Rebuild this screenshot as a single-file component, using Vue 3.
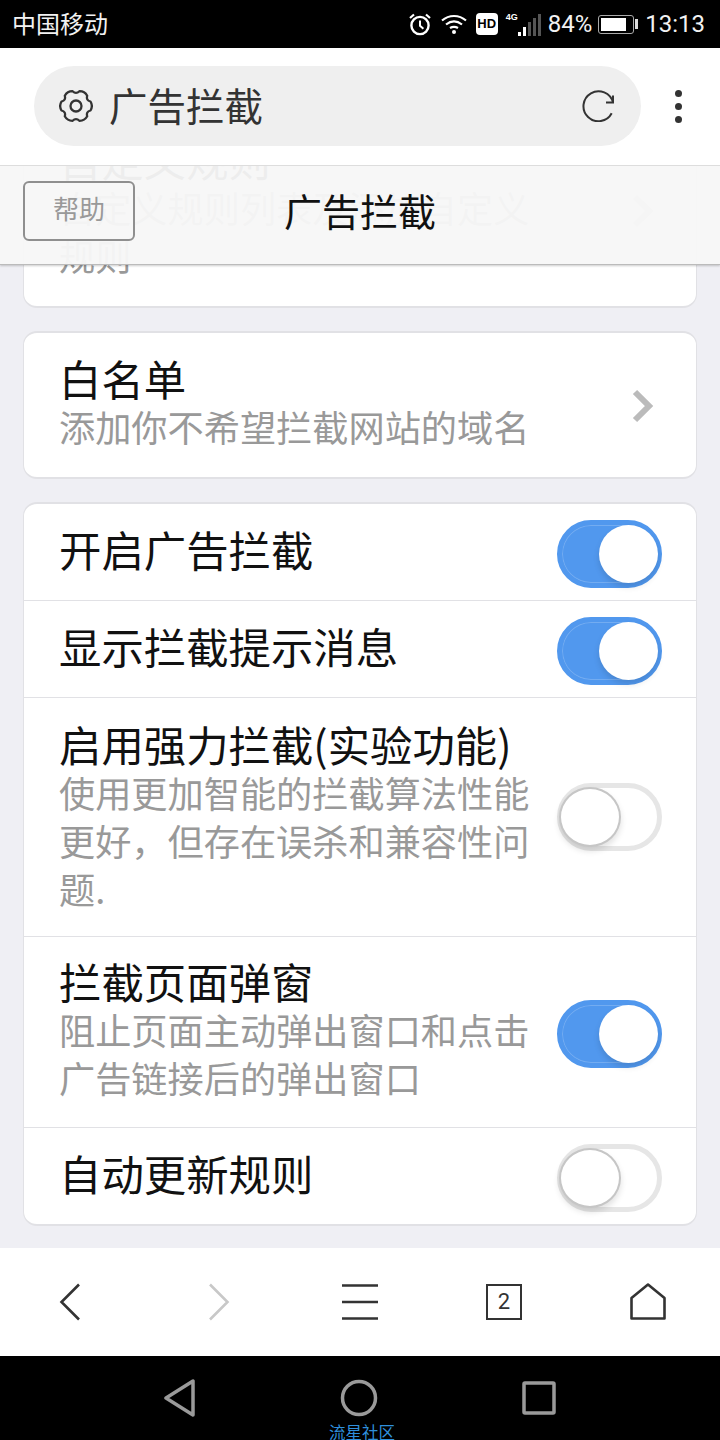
<script setup>
const rows = [
  { title: "开启广告拦截", on: true, cls: "plain" },
  { title: "显示拦截提示消息", on: true, cls: "plain" },
  { title: "启用强力拦截(实验功能)", sub: "使用更加智能的拦截算法性能更好，但存在误杀和兼容性问题.", on: false, cls: "long" },
  { title: "拦截页面弹窗", sub: "阻止页面主动弹出窗口和点击广告链接后的弹出窗口", on: true, cls: "long" },
  { title: "自动更新规则", on: false, cls: "plain" },
];

// 六瓣齿轮轮廓
function gearPath() {
  const cx = 17;
  const cy = 17;
  const p = (r, t) => `${(cx + r * Math.cos(t)).toFixed(1)} ${(cy + r * Math.sin(t)).toFixed(1)}`;
  let d = "";
  for (let i = 0; i < 6; i++) {
    const a = (i * 60 * Math.PI) / 180;
    const s = a - 0.3;
    const e = a + 0.3;
    d += i === 0 ? `M${p(15.2, s)}` : ` Q${p(11.4, a - Math.PI / 6)} ${p(15.2, s)}`;
    d += ` Q${p(17.2, a)} ${p(15.2, e)}`;
    if (i === 5) d += ` Q${p(11.4, a + Math.PI / 6)} ${p(15.2, -0.3)}Z`;
  }
  return d;
}
const gear = gearPath();
</script>

<template>
  <div class="page">
    <div class="status">
      <span class="carrier">中国移动</span>
      <div class="status-right">
        <svg class="ic-alarm" width="24" height="24" viewBox="0 0 24 24" fill="none" stroke="#fff" stroke-width="2.4">
          <circle cx="12" cy="13.5" r="8.6" />
          <path d="M12 8.5v5.3l3.4 3" stroke-width="2" />
          <path d="M2 6l4-3.5M22 6l-4-3.5" stroke-width="2.2" />
        </svg>
        <svg class="ic-wifi" width="26" height="20" viewBox="0 0 26 20" fill="none" stroke="#fff" stroke-width="2.2">
          <path d="M1 6.5C8 .5 18 .5 25 6.5" />
          <path d="M5 10.5C10 6.5 16 6.5 21 10.5" />
          <path d="M9 14C11.5 12.5 14.5 12.5 17 14" />
          <circle cx="13" cy="18" r="2" fill="#fff" stroke="none" />
        </svg>
        <span class="hd">HD</span>
        <div class="signal">
          <span class="g4">4G</span>
          <div class="bars">
            <i class="b1"></i><i class="b2"></i><i class="b3"></i><i class="b4"></i><i class="b5"></i>
          </div>
        </div>
        <span class="pct">84%</span>
        <div class="battery"><i></i></div>
        <span class="nub"></span>
        <span class="clock">13:13</span>
      </div>
    </div>

    <div class="urlbar">
      <div class="pill">
        <svg class="gear" width="34" height="34" viewBox="0 0 34 34" fill="none" stroke="#333" stroke-width="2.3">
          <path :d="gear" stroke-linejoin="round" />
          <circle cx="17" cy="17" r="5.5" />
        </svg>
        <span class="pill-title">广告拦截</span>
        <svg class="reload" width="34" height="32" viewBox="0 0 34 32" fill="none" stroke="#333" stroke-width="2">
          <path d="M31 12.5A15 15 0 1 0 29.700 23.300" />
          <path d="M24 12.5H31V5.500" />
        </svg>
      </div>
      <div class="dots"><i></i><i></i><i></i></div>
    </div>

    <div class="content">
      <div class="overlay-head">
        <button class="help">帮助</button>
        <span class="head-title">广告拦截</span>
      </div>

      <section class="card first">
        <div class="row link">
          <div class="text">
            <div class="title">自定义规则</div>
            <div class="sub">自定义规则列表及添加自定义规则</div>
          </div>
          <svg class="chevron" width="24" height="34" viewBox="0 0 24 34" fill="none" stroke="#bbb" stroke-width="6">
            <path d="M4 3l14 14L4 31" />
          </svg>
        </div>
      </section>

      <section class="card">
        <div class="row link">
          <div class="text">
            <div class="title">白名单</div>
            <div class="sub">添加你不希望拦截网站的域名</div>
          </div>
          <svg class="chevron" width="24" height="34" viewBox="0 0 24 34" fill="none" stroke="#bbb" stroke-width="6">
            <path d="M4 3l14 14L4 31" />
          </svg>
        </div>
      </section>

      <section class="card">
        <div v-for="r in rows" :key="r.title" class="row" :class="r.cls">
          <div class="text">
            <div class="title">{{ r.title }}</div>
            <div v-if="r.sub" class="sub">{{ r.sub }}</div>
          </div>
          <div class="toggle" :class="{ on: r.on }"><i></i></div>
        </div>
      </section>
    </div>

    <div class="toolbar">
      <svg width="36" height="38" viewBox="0 0 36 38" fill="none" stroke="#333" stroke-width="2.6">
        <path d="M27 1.500L9.500 19 27 36.500" />
      </svg>
      <svg width="36" height="38" viewBox="0 0 36 38" fill="none" stroke="#c8c8c8" stroke-width="2.6">
        <path d="M9 1.500L26.500 19 9 36.500" />
      </svg>
      <svg width="36" height="38" viewBox="0 0 36 38" fill="none" stroke="#333" stroke-width="2.6">
        <path d="M0 2.500h36M0 19h36M0 35.500h36" />
      </svg>
      <div class="tabs">2</div>
      <svg width="36" height="38" viewBox="0 0 36 38" fill="none" stroke="#333" stroke-width="2.6">
        <path d="M1.500 35.500V15L18 1.500 34.500 15v20.500z" stroke-linejoin="round" />
      </svg>
    </div>

    <div class="navbar">
      <div class="nav-icons">
        <svg width="32" height="38" viewBox="0 0 32 38" fill="none" stroke="#9a9a9a" stroke-width="3.5" stroke-linejoin="round">
          <path d="M29 2v34L2 19z" />
        </svg>
        <svg width="38" height="38" viewBox="0 0 38 38" fill="none" stroke="#9a9a9a" stroke-width="3.5">
          <circle cx="19" cy="19" r="16.5" />
        </svg>
        <svg width="34" height="34" viewBox="0 0 34 34" fill="none" stroke="#9a9a9a" stroke-width="3.5" stroke-linejoin="round">
          <rect x="2" y="2" width="30" height="30" rx="1" />
        </svg>
      </div>
      <span class="mark">流星社区</span>
    </div>
  </div>
</template>

<style>
html,
body {
  margin: 0;
  background: #000;
}
</style>

<style scoped>
.page {
  display: flex;
  flex-direction: column;
  width: 720px;
  height: 1440px;
  overflow: hidden;
  font-family: "Noto Sans CJK SC", "Noto Sans", sans-serif;
}

.status {
  display: flex;
  flex: none;
  align-items: center;
  justify-content: space-between;
  height: 48px;
  padding: 0 15px 0 12px;
  box-sizing: border-box;
  background: #000;
  color: #f2f2f2;
}

.carrier {
  padding-bottom: 3px;
  font-size: 24px;
}

.status-right {
  display: flex;
  align-items: center;
}

.ic-wifi {
  margin-left: 9px;
}

.hd {
  width: 22px;
  height: 22px;
  margin-left: 9px;
  border-radius: 4px;
  background: #fff;
  color: #000;
  font: 700 13px/22px "Liberation Sans", sans-serif;
  text-align: center;
}

.signal {
  position: relative;
  width: 35px;
  height: 24px;
  margin-left: 8px;
}

.g4 {
  position: absolute;
  top: -1px;
  left: 0;
  color: #fff;
  font: 700 9px/12px "Liberation Sans", sans-serif;
}

.bars {
  position: absolute;
  right: 0;
  bottom: 0;
  display: flex;
  align-items: flex-end;
  gap: 2px;
}

.bars i {
  display: block;
  width: 3px;
  background: #555;
}

.bars .b1 {
  height: 4px;
  background: #fff;
}

.bars .b2 {
  height: 9px;
  background: #fff;
}

.bars .b3 {
  height: 14px;
}

.bars .b4 {
  height: 18px;
}

.bars .b5 {
  height: 22px;
}

.pct {
  margin-left: 7px;
  font: 400 24px/28px Roboto, sans-serif;
}

.battery {
  width: 36px;
  height: 19px;
  margin-left: 6px;
  padding: 2px;
  box-sizing: border-box;
  border: 1px solid #aaa;
  border-radius: 3px;
}

.battery i {
  display: block;
  width: 84%;
  height: 100%;
  background: #fff;
}

.nub {
  width: 3px;
  height: 10px;
  margin-left: 1px;
  background: #ddd;
}

.clock {
  margin-left: 7px;
  font: 400 24px/28px Roboto, sans-serif;
}

.urlbar {
  display: flex;
  flex: none;
  align-items: center;
  height: 117px;
  padding: 0 0 1px 34px;
  box-sizing: border-box;
  background: #fff;
}

.pill {
  display: flex;
  align-items: center;
  width: 607px;
  height: 80px;
  padding: 0 25px 0 25px;
  box-sizing: border-box;
  border-radius: 40px;
  background: #efefef;
}

.pill-title {
  flex: 1;
  margin-left: 16px;
  padding-bottom: 4px;
  color: #333;
  font-size: 38.5px;
  line-height: 48px;
}

.dots {
  display: flex;
  flex-direction: column;
  gap: 6px;
  margin-left: 34px;
}

.dots i {
  display: block;
  width: 7px;
  height: 7px;
  border-radius: 50%;
  background: #333;
}

.content {
  position: relative;
  flex: 1;
  min-height: 0;
  overflow: hidden;
  display: flex;
  flex-direction: column;
  gap: 23px;
  padding: 0 23px;
  background: #efeff4;
}

.overlay-head {
  position: absolute;
  top: 0;
  left: 0;
  right: 0;
  z-index: 2;
  display: flex;
  align-items: center;
  height: 100px;
  box-sizing: border-box;
  padding: 0 0 8px 23px;
  border-top: 1px solid #ddd;
  border-bottom: 1px solid #bbb;
  background: rgba(247, 247, 247, 0.96);
  box-shadow: 0 1px 2px rgba(0, 0, 0, 0.2);
}

.help {
  width: 112px;
  height: 60px;
  padding: 0 0 6px;
  border: 2px solid #8f8f8f;
  border-radius: 6px;
  background: transparent;
  color: #999;
  font: 400 26px/1 "Noto Sans CJK SC", sans-serif;
}

.head-title {
  margin-left: 149px;
  padding-bottom: 3px;
  color: #111;
  font-size: 38px;
  line-height: 48px;
}

.card {
  flex: none;
  border: 1px solid #e1e1e5;
  border-top-width: 2px;
  border-bottom-width: 2px;
  border-radius: 14px;
  background: #fff;
}

.first {
  margin-top: -53px;
}

.row {
  display: flex;
  align-items: center;
  justify-content: space-between;
  padding: 16px 34px 12px 35px;
}

.row + .row {
  border-top: 1px solid #e1e1e5;
}

.row.long {
  padding-top: 25px;
  padding-bottom: 21px;
}

.row.long:nth-child(3) .toggle {
  margin-bottom: 4px;
}

.row.long:nth-child(4) {
  padding-top: 23px;
  padding-bottom: 23px;
}

.row.long:nth-child(4) .toggle {
  margin-top: 3px;
}

.row.link {
  padding-top: 25px;
  padding-bottom: 23px;
  padding-right: 41px;
}

.text {
  width: 490px;
  margin-top: -3px;
  margin-bottom: 3px;
}

.link .text {
  margin-top: -4px;
  margin-bottom: 4px;
}

.plain .text {
  margin-top: -5px;
  margin-bottom: 5px;
}

.title {
  color: #111;
  font-size: 42.4px;
  line-height: 48px;
  white-space: nowrap;
}

.sub {
  color: #999;
  font-size: 36.2px;
  line-height: 48px;
}

.toggle {
  position: relative;
  flex: none;
  width: 105px;
  height: 68px;
  box-sizing: border-box;
  border: 5px solid #e6e6e6;
  border-radius: 34px;
  background: #fff;
}

.toggle i {
  position: absolute;
  top: -1px;
  left: -3px;
  width: 62px;
  height: 60px;
  box-sizing: border-box;
  border: 2px solid #c6c6c6;
  border-radius: 50%;
  background: #fff;
  box-shadow: 0 4px 6px rgba(0, 0, 0, 0.12);
}

.toggle.on {
  border-color: #5198ee;
  background: #5198ee;
  box-shadow: inset 0 0 0 1px rgba(255, 255, 255, 0.2);
}

.toggle.on i {
  top: 0;
  left: 37px;
  width: 59px;
  height: 58px;
  border: 0;
  box-shadow: 0 4px 6px rgba(0, 0, 0, 0.12);
}

.toolbar {
  display: grid;
  flex: none;
  grid-template-columns: 149px 141px 144px 144px 36px;
  align-items: center;
  height: 108px;
  padding-left: 52px;
  box-sizing: border-box;
  background: #fff;
}

.tabs {
  width: 36px;
  height: 36px;
  box-sizing: border-box;
  border: 2px solid #333;
  color: #333;
  font: 400 22px/32px Roboto, sans-serif;
  text-align: center;
}

.navbar {
  position: relative;
  flex: none;
  height: 84px;
  background: #000;
}

.nav-icons {
  display: flex;
  align-items: center;
  justify-content: space-between;
  width: 392px;
  margin-left: 164px;
  padding-top: 23px;
}

.mark {
  position: absolute;
  top: 66px;
  left: 329px;
  color: #2f8fdc;
  font-size: 16.5px;
  line-height: 20px;
}
</style>
